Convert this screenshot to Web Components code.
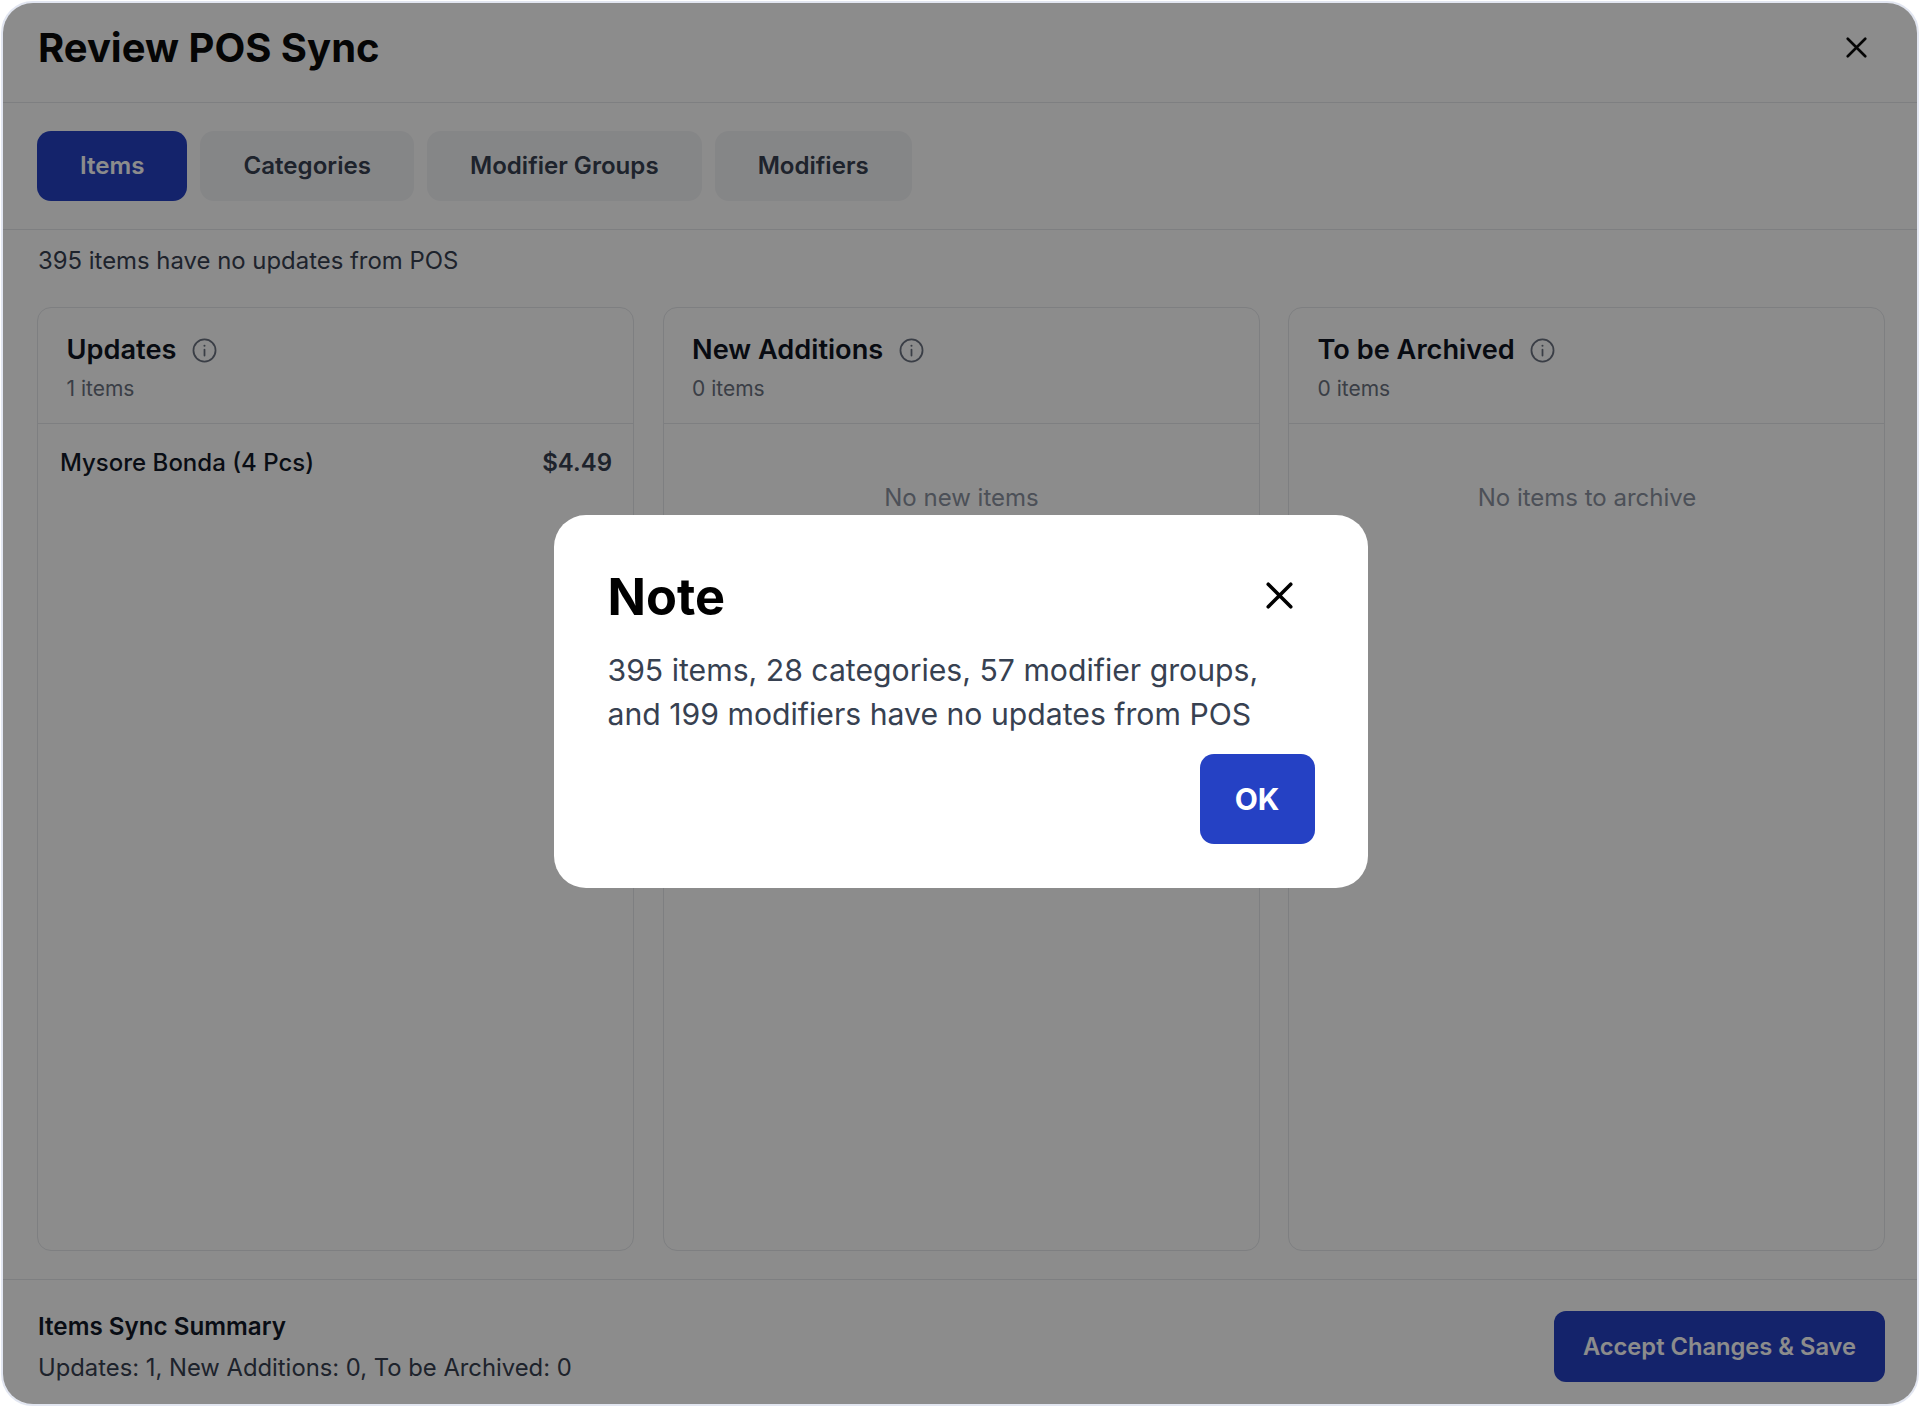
<!DOCTYPE html>
<html lang="en">
<head>
<meta charset="utf-8">
<title>Review POS Sync</title>
<style>
  html, body { margin: 0; height: 100%; }
  body {
    background: #fff;
    font-family: Inter, "Liberation Sans", sans-serif;
    -webkit-font-smoothing: antialiased;
  }
</style>
</head>
<body>
<pos-sync-panel>
  <sync-tab active>Items</sync-tab>
  <sync-tab>Categories</sync-tab>
  <sync-tab>Modifier Groups</sync-tab>
  <sync-tab>Modifiers</sync-tab>

  <sync-card slot="cards" heading="Updates" count="1 items">
    <sync-row name="Mysore Bonda (4 Pcs)" price="$4.49"></sync-row>
  </sync-card>
  <sync-card slot="cards" heading="New Additions" count="0 items" empty="No new items"></sync-card>
  <sync-card slot="cards" heading="To be Archived" count="0 items" empty="No items to archive"></sync-card>

  <note-dialog slot="dialog">395 items, 28 categories, 57 modifier groups,<br>and 199 modifiers have no updates from POS</note-dialog>
</pos-sync-panel>

<script>
const closeIcon = `<svg viewBox="0 0 24 24" fill="none" stroke="currentColor" stroke-linecap="round"><path d="M2 2 22 22M22 2 2 22"/></svg>`;

class PosSyncPanel extends HTMLElement {
    constructor() {
        super();
        this.attachShadow({ mode: 'open' }).innerHTML = `
        <style>
          :host {
            display: block;
            box-sizing: border-box;
            height: 1408px;
            padding: 1px 1px 2px 1px;
            background: #fff;
            color: #111827;
          }
          .panel {
            position: relative;
            box-sizing: border-box;
            height: 100%;
            display: flex;
            flex-direction: column;
            background: #fff;
            border: 2px solid #e2e6f1;
            border-radius: 32px;
            overflow: hidden;
          }
          header {
            flex: none;
            display: flex;
            align-items: center;
            justify-content: space-between;
            padding: 0 50px 10px 35px;
            height: 89px;
            border-bottom: 1px solid #e5e7eb;
          }
          h1 { margin: 0; font-size: 40px; line-height: 48px; font-weight: 700; color: #0a0a0a; }
          .close { width: 21px; height: 21px; color: #0a0a0a; stroke-width: 3; }
          .close svg { display: block; width: 100%; height: 100%; }
          .tabs {
            flex: none;
            display: flex;
            gap: 13px;
            padding: 28px 32px 28px 34px;
            border-bottom: 1px solid #e5e7eb;
          }
          .status {
            flex: none;
            padding: 16px 35px 0;
            font-size: 23.9px;
            line-height: 30px;
            color: #374151;
          }
          .cards {
            flex: 1;
            min-height: 0;
            display: grid;
            grid-template-columns: repeat(3, 1fr);
            gap: 28.5px;
            margin: 31px 32px 28px 34px;
          }
          footer {
            flex: none;
            display: flex;
            align-items: center;
            justify-content: space-between;
            height: 116px;
            padding: 8px 32px 0 35px;
            border-top: 1px solid #e5e7eb;
          }
          .summary { margin-top: 3px; }
          .summary b { display: block; font-size: 24.2px; line-height: 30px; font-weight: 600; color: #111827; margin-bottom: 11px; }
          .summary span { display: block; font-size: 23.8px; line-height: 30px; color: #374151; }
          .accept {
            font: 600 23.7px/30px Inter, "Liberation Sans", sans-serif;
            color: #fff;
            background: #2541c4;
            border: 0;
            border-radius: 12px;
            width: 331px;
            height: 71px;
            padding: 2px 0 0;
          }
          .overlay {
            position: absolute;
            inset: 0;
            display: flex;
            align-items: center;
            justify-content: center;
            background: rgba(0, 0, 0, .45);
          }
          ::slotted(note-dialog) { margin: -4px 0 0 1px; }
        </style>
        <div class="panel">
          <header>
            <h1>Review POS Sync</h1>
            <span class="close">${closeIcon}</span>
          </header>
          <nav class="tabs"><slot></slot></nav>
          <div class="status">395 items have no updates from POS</div>
          <div class="cards"><slot name="cards"></slot></div>
          <footer>
            <div class="summary">
              <b>Items Sync Summary</b>
              <span>Updates: 1, New Additions: 0, To be Archived: 0</span>
            </div>
            <button class="accept">Accept Changes &amp; Save</button>
          </footer>
          <div class="overlay"><slot name="dialog"></slot></div>
        </div>`;
    }
}

class SyncTab extends HTMLElement {
    constructor() {
        super();
        this.attachShadow({ mode: 'open' }).innerHTML = `
        <style>
          :host {
            display: block;
            box-sizing: border-box;
            height: 70px;
            padding: 0 43px;
            border-radius: 14px;
            background: #f3f4f6;
            color: #374151;
            font-size: 24.1px;
            font-weight: 600;
            line-height: 70px;
          }
          :host([active]) { background: #2541c4; color: #fff; }
        </style>
        <slot></slot>`;
    }
}

class SyncCard extends HTMLElement {
    constructor() {
        super();
        const empty = this.getAttribute('empty');
        this.attachShadow({ mode: 'open' }).innerHTML = `
        <style>
          :host {
            display: flex;
            flex-direction: column;
            box-sizing: border-box;
            border: 1px solid #e5e7eb;
            border-radius: 14px;
            min-height: 0;
          }
          .head {
            flex: none;
            height: 116px;
            box-sizing: border-box;
            padding: 24px 28.5px 0;
            border-bottom: 1px solid #e5e7eb;
          }
          h2 {
            margin: 0;
            display: flex;
            align-items: center;
            gap: 15.5px;
            font-size: 27.2px;
            line-height: 36px;
            font-weight: 600;
            color: #0f1422;
          }
          h2 svg { width: 25px; height: 25px; flex: none; color: #6b7280; }
          .count { margin-top: 8px; font-size: 21px; line-height: 26px; color: #6b7280; }
          .body { flex: 1; padding: 24px 21px 0 22px; }
          .none { margin-top: 35px; text-align: center; font-size: 24px; line-height: 30px; color: #8b93a0; }
        </style>
        <div class="head">
          <h2>${this.getAttribute('heading')}
            <svg viewBox="0 0 24 24" fill="none" stroke="currentColor" stroke-width="1.7" stroke-linecap="round">
              <circle cx="12" cy="12" r="10.6"/><path d="M12 11.2v5.6"/><path d="M12 7.4v.1" stroke-width="2"/>
            </svg>
          </h2>
          <div class="count">${this.getAttribute('count')}</div>
        </div>
        <div class="body"><slot></slot>${empty ? `<div class="none">${empty}</div>` : ''}</div>`;
    }
}

class SyncRow extends HTMLElement {
    constructor() {
        super();
        this.attachShadow({ mode: 'open' }).innerHTML = `
        <style>
          :host {
            display: flex;
            justify-content: space-between;
            font-size: 24px;
            line-height: 30px;
            font-weight: 500;
            color: #111827;
          }
          .price { font-weight: 600; color: #374151; }
        </style>
        <span>${this.getAttribute('name')}</span>
        <span class="price">${this.getAttribute('price')}</span>`;
    }
}

class NoteDialog extends HTMLElement {
    constructor() {
        super();
        this.attachShadow({ mode: 'open' }).innerHTML = `
        <style>
          :host {
            display: block;
            box-sizing: border-box;
            width: 814px;
            height: 373px;
            padding: 52px 53px 44px 54px;
            border-radius: 32px;
            background: #fff;
          }
          .top { display: flex; justify-content: space-between; align-items: center; height: 60px; }
          h3 { margin: 0; font-size: 50.5px; line-height: 60px; font-weight: 700; color: #000; }
          .close { display: flex; align-items: center; justify-content: center; width: 70px; height: 60px; color: #000; stroke-width: 3.2; }
          .close svg { width: 27px; height: 27px; margin-top: -4px; }
          p { margin: 21px 0 0; font-size: 30.2px; line-height: 44px; color: #374151; }
          .foot { display: flex; justify-content: flex-end; margin-top: 18px; }
          button {
            width: 115px;
            height: 90px;
            border: 0;
            border-radius: 14px;
            padding: 0;
            background: #2541c4;
            color: #fff;
            font: 700 30px Inter, "Liberation Sans", sans-serif;
          }
        </style>
        <div class="top"><h3>Note</h3><span class="close">${closeIcon}</span></div>
        <p><slot></slot></p>
        <div class="foot"><button>OK</button></div>`;
    }
}

customElements.define('pos-sync-panel', PosSyncPanel);
customElements.define('sync-tab', SyncTab);
customElements.define('sync-card', SyncCard);
customElements.define('sync-row', SyncRow);
customElements.define('note-dialog', NoteDialog);
</script>
</body>
</html>
